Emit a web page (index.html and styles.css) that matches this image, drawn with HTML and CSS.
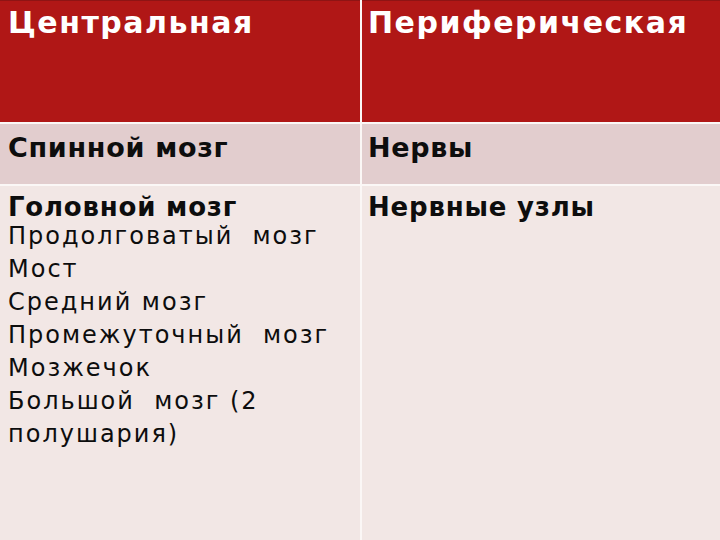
FILE: index.html
```html
<!DOCTYPE html>
<html lang="ru">
<head>
<meta charset="utf-8">
<link rel="stylesheet" href="styles.css">
</head>
<body>
<div class="table">
  <div class="cell head">Центральная</div>
  <div class="cell head">Периферическая</div>
  <div class="cell row2">Спинной мозг</div>
  <div class="cell row2">Нервы</div>
  <div class="cell row3">
    <div class="bold">Головной мозг</div>
    <div class="list">Продолговатый&nbsp; мозг<br>Мост<br>Средний мозг<br>Промежуточный&nbsp; мозг<br>Мозжечок<br>Большой&nbsp; мозг (2<br>полушария)</div>
  </div>
  <div class="cell row3">
    <div class="bold">Нервные узлы</div>
  </div>
</div>
</body>
</html>
```
FILE: styles.css
```css
html, body {
  margin: 0;
  padding: 0;
  width: 720px;
  height: 540px;
  overflow: hidden;
  background: #ffffff;
}
.table {
  display: grid;
  grid-template-columns: 360px 1fr;
  grid-template-rows: 122px 60px 354px;
  column-gap: 2px;
  row-gap: 2px;
  background: #fbf7f6;
  height: 540px;
  font-family: "DejaVu Sans", sans-serif;
}
.cell {
  padding: 6px 8px 0 8px;
}
.cell:nth-child(2n) {
  padding-left: 6px;
}
.head {
  background: #b01716;
  color: #ffffff;
  font-size: 30px;
  font-weight: bold;
  letter-spacing: 1.5px;
  border-top: 1px solid #8e1414;
  padding-top: 4px;
}
.row2 {
  background: #e2cdce;
  color: #0d0d0d;
  font-size: 27px;
  font-weight: bold;
  letter-spacing: 0.7px;
  padding-top: 8px;
}
.row3 {
  background: #f2e7e5;
  color: #0d0d0d;
  padding-top: 8px;
}
.bold {
  font-size: 26px;
  font-weight: bold;
  letter-spacing: 0.8px;
  line-height: 26px;
}
.list {
  font-size: 24px;
  line-height: 33px;
  letter-spacing: 2px;
}
```
